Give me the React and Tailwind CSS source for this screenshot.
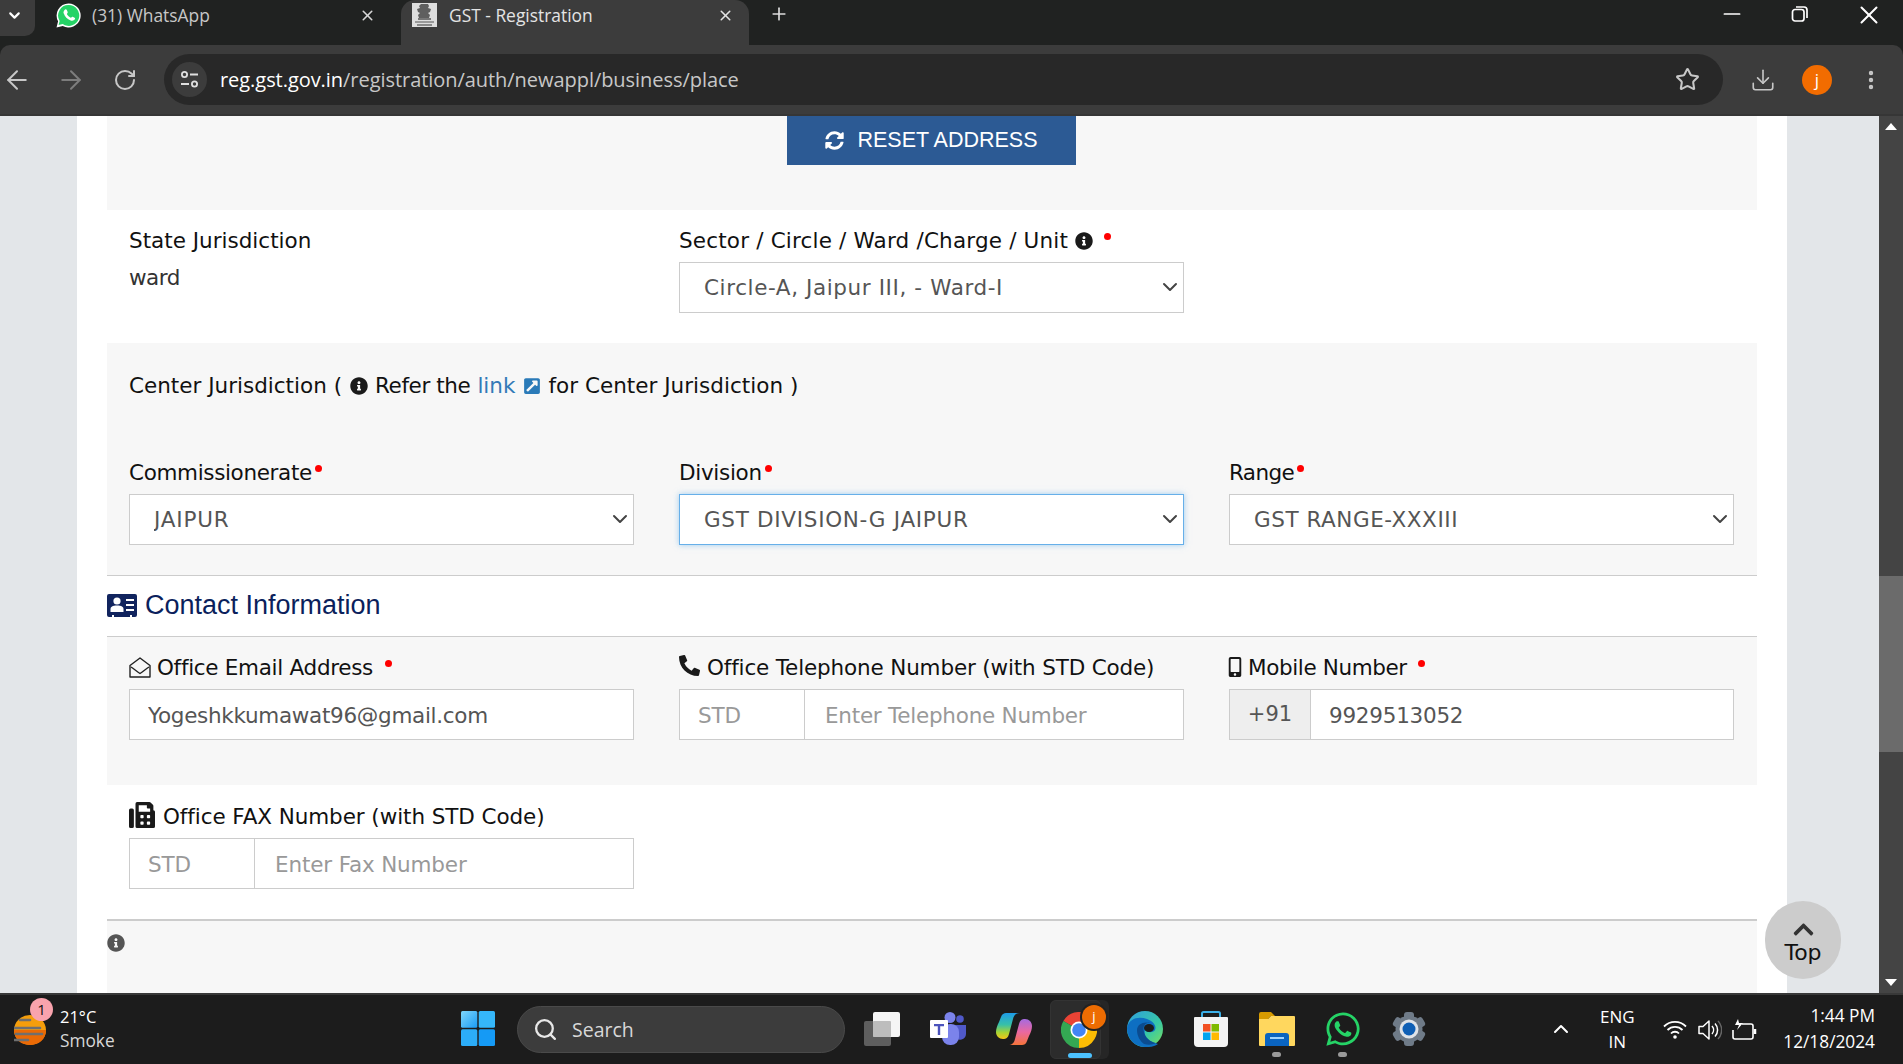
import React from "react";
import { FaWhatsapp, FaInfoCircle, FaSyncAlt, FaPhoneAlt, FaMobileAlt, FaFax, FaExternalLinkSquareAlt, FaChevronUp } from "react-icons/fa";
import { ArrowLeft, ArrowRight, RotateCw, Star, Download, EllipsisVertical, Minus, X, Plus, ChevronDown, Search, ChevronUp } from "lucide-react";

const Req = ({ className = "" }) => <span className={`inline-block w-[7px] h-[7px] rounded-full bg-[#ff0000] ${className}`} />;

const Sel = ({ value, focus, track }) => (
  <div className="relative">
    <select
      defaultValue={value}
      className={`appearance-none w-full h-[51px] bg-white pl-[24px] pt-[2px] text-[#555] text-[21.5px] outline-none border ${track} ${focus ? "border-[#66afe9] shadow-[0_0_6px_rgba(102,175,233,0.6)]" : "border-[#ccc]"}`}
    >
      <option>{value}</option>
    </select>
    <ChevronDown size={24} strokeWidth={2} className="absolute right-[2px] top-[13px] text-[#444] pointer-events-none" />
  </div>
);

const Field = ({ placeholder, value, className = "" }) => (
  <input
    readOnly
    placeholder={placeholder}
    defaultValue={value}
    className={`h-[51px] bg-white border border-[#ccc] pl-[18px] pr-[18px] pt-[1px] text-[21.5px] text-[#555] placeholder:text-[#999] outline-none min-w-0 ${className}`}
  />
);

const Label = ({ children, className = "" }) => <div className={`h-[26px] flex items-center pt-[1px] text-[#111] text-[21.5px] leading-none whitespace-nowrap ${className}`}>{children}</div>;

function Emblem() {
  return (
    <svg width="25" height="24" viewBox="0 0 25 24" className="shrink-0">
      <rect width="25" height="24" fill="#dedede" />
      <path d="M9 1h7l1 2-1 2 3 1-1 3-2 1 2 2-1 3H7l-1-3 2-2-2-1-1-3 3-1-1-2z" fill="#5f5f5f" />
      <rect x="6" y="15" width="13" height="2" fill="#777" />
      <rect x="3" y="18" width="19" height="2" fill="#999" />
      <rect x="5" y="21" width="15" height="2" fill="#888" />
    </svg>
  );
}

const PHONE = "M8 7c1-1.5 2-1 2.5 0l.7 1.7c.2.5 0 1-.5 1.5-.3.3-.2.7.1 1.2.7 1.1 1.7 2 2.9 2.6.4.2.7.2 1-.1.4-.5.8-.9 1.3-.7l1.8.9c.6.3.7.9.3 1.6-.8 1.3-2.4 1.7-4 1.1-3.3-1.2-5.6-3.6-6.6-6.6C7 9.8 7.1 8 8 7z";

function Browser() {
  return (
    <>
      <div className="h-[45px] shrink-0 bg-[#202221] flex items-start text-[17.4px] font-['Open_Sans',sans-serif]">
        <div className="w-[35px] h-[36px] bg-[#3c3c3c] rounded-br-[10px] flex items-center justify-center pr-[6px]">
          <ChevronDown size={17} strokeWidth={3} className="text-white -mt-[6px]" />
        </div>
        <div className="w-[366px] h-[45px] flex items-center pl-[21px] pr-[25px] pb-[15px] text-[#c7c7c7]">
          <svg width="25" height="25" viewBox="0 0 24 24" className="mr-[11px] shrink-0">
            <path d="M12 .5A11.5 11.5 0 0 0 2 17.6L.5 23.5l6-1.5A11.5 11.5 0 1 0 12 .5z" fill="#fff" />
            <path d="M12 2a10 10 0 0 0-8.5 15.2l-1 3.9 4-1A10 10 0 1 0 12 2z" fill="#25d366" />
            <path d={PHONE} fill="#fff" />
          </svg>
          <span className="flex-1">(31) WhatsApp</span>
          <X size={17} strokeWidth={2.2} className="text-[#d8d8d8]" />
        </div>
        <div className="w-[348px] h-[45px] bg-[#3c3c3c] rounded-t-[14px] flex items-center pl-[11px] pr-[15px] pb-[15px] text-[#e4e4e4]">
          <Emblem />
          <span className="flex-1 ml-[12px]">GST - Registration</span>
          <X size={17} strokeWidth={2.2} className="text-[#e4e4e4]" />
        </div>
        <div className="ml-[20px] h-[27px] flex items-center">
          <Plus size={20} strokeWidth={2} className="text-[#dcdcdc]" />
        </div>
        <div className="flex-1" />
        <div className="flex items-center h-[27px] pr-[19px] text-white">
          <Minus size={26} strokeWidth={1.6} />
          <svg className="ml-[46px]" width="18" height="18" viewBox="0 0 18 18" fill="none" stroke="currentColor" strokeWidth="1.7">
            <rect x="1.5" y="4.5" width="11.5" height="11.5" rx="2.5" />
            <path d="M5 2h8a3 3 0 0 1 3 3v8" />
          </svg>
          <X size={30} strokeWidth={1.6} className="ml-[45px] mt-[2px]" />
        </div>
      </div>
      <div className="h-[71px] shrink-0 bg-[#3c3c3c] rounded-t-[10px] border-b-2 border-[#363636] flex items-center text-[#c7c7c7]">
        <div className="w-[34px] flex justify-center"><ArrowLeft size={30} strokeWidth={1.6} /></div>
        <div className="w-[54px] ml-[10px] flex justify-center"><ArrowRight size={30} strokeWidth={1.6} className="text-[#7d7d7d]" /></div>
        <div className="w-[54px] flex justify-center"><RotateCw size={24} strokeWidth={2} /></div>
        <div className="ml-[12px] w-[1559px] h-[51px] bg-[#282828] rounded-full flex items-center pl-[8px] pr-[23px]">
          <div className="w-[35px] h-[35px] rounded-full bg-[#3c3c3c] flex items-center justify-center">
            <svg width="19" height="19" viewBox="0 0 19 19" fill="none" stroke="#e0e0e0" strokeWidth="1.8">
              <circle cx="4.5" cy="4.5" r="2.6" /><path d="M10 4.5h8M1 14h8" /><circle cx="14.5" cy="14" r="2.6" />
            </svg>
          </div>
          <div className="ml-[13px] flex-1 text-[20px] text-[#c7c7c7] font-['Open_Sans',sans-serif] tracking-[-0.05px]">
            <span className="text-white">reg.gst.gov.in</span>/registration/auth/newappl/business/place
          </div>
          <Star size={25} strokeWidth={2} />
        </div>
        <div className="ml-[27px] w-[26px] flex justify-center"><Download size={36} strokeWidth={1.5} /></div>
        <div className="ml-[26px] w-[30px] h-[30px] rounded-full bg-[#f26c00] text-white text-[17px] flex items-center justify-center font-['Open_Sans',sans-serif]">j</div>
        <div className="ml-[27px] w-[24px] flex justify-center"><EllipsisVertical size={24} strokeWidth={2.4} /></div>
      </div>
    </>
  );
}

const COLS = "grid grid-cols-[505px_505px_505px] gap-x-[45px] px-[22px]";

function Page() {
  return (
    <div className="flex-1 min-h-0 flex bg-[#e3e6e9] font-['DejaVu_Sans',sans-serif] overflow-hidden">
      <div className="ml-[77px] w-[1710px] bg-white px-[30px] overflow-hidden h-full">
        <div className="w-[1650px]">
          <div className="h-[94px] bg-[#f7f7f7] flex justify-center">
            <button className="mr-[2px] w-[289px] h-[49px] bg-[#2c5a94] text-white text-[21.5px] flex items-center justify-center gap-[13px] pb-[1px] pl-[1px] font-['Liberation_Sans',sans-serif]">
              <FaSyncAlt size={19} /> RESET ADDRESS
            </button>
          </div>

          <div className={`h-[133px] ${COLS}`}>
            <div className="pt-[17px]">
              <Label>State Jurisdiction</Label>
              <div className="h-[26px] mt-[11px] pt-[1px] flex items-center text-[#333] text-[21.5px] leading-none tracking-[-0.5px]">ward</div>
            </div>
            <div className="pt-[17px]">
              <Label className="tracking-[0.18px]">
                Sector / Circle / Ward /Charge / Unit
                <FaInfoCircle size={18} className="ml-[7px] text-[#1a1a1a]" />
                <Req className="ml-[11px] -mt-[8px]" />
              </Label>
              <div className="mt-[9px]"><Sel value="Circle-A, Jaipur III, - Ward-I" track="tracking-[0.6px]" /></div>
            </div>
          </div>

          <div className="h-[233px] bg-[#f7f7f7] border-b border-[#ccc]">
            <div className="pt-[29px] h-[116px] px-[22px]">
              <Label>
                <span>Center Jurisdiction (</span>
                <FaInfoCircle size={18} className="ml-[8px] mr-[7px] text-[#1a1a1a]" />
                <span className="tracking-[-0.4px]">Refer the</span>
                <span className="ml-[7px] text-[#337ab7]">link</span>
                <FaExternalLinkSquareAlt size={18} className="ml-[8px] mr-[7px] text-[#2a7ab8]" />
                <span className="tracking-[0.02px]">for Center Jurisdiction )</span>
              </Label>
            </div>
            <div className={COLS}>
              {[
                ["Commissionerate", "JAIPUR", false, "tracking-[-0.35px]", "tracking-[0.8px]"],
                ["Division", "GST DIVISION-G JAIPUR", true, "tracking-[-0.3px]", "tracking-[0.7px]"],
                ["Range", "GST RANGE-XXXIII", false, "tracking-[-0.6px]", "tracking-[0.55px]"],
              ].map(([l, v, f, lt, st]) => (
                <div key={l}>
                  <Label className={lt}>{l}<Req className="ml-[3px] -mt-[8px]" /></Label>
                  <div className="mt-[9px]"><Sel value={v} focus={f} track={st} /></div>
                </div>
              ))}
            </div>
          </div>

          <div className="h-[61px] border-b border-[#ccc] flex items-center pb-[2px] font-['Liberation_Sans',sans-serif] text-[#0b1f5c] text-[27px]">
            <svg width="30" height="23" viewBox="0 0 30 23" className="mr-[8px] shrink-0">
              <path d="M2 0h26a2 2 0 0 1 2 2v19a2 2 0 0 1-2 2h-3v-2h-2v2H7v-2H5v2H2a2 2 0 0 1-2-2V2a2 2 0 0 1 2-2z" fill="#11245e" />
              <circle cx="10" cy="7" r="3.6" fill="#fff" />
              <path d="M3.5 18v-3c0-2 2-3.5 6.5-3.5s6.5 1.500 6.500 3.500v3z" fill="#fff" />
              <path d="M19 5h8v2h-8zM19 10h8v2h-8zM19 15h8v2h-8z" fill="#fff" />
            </svg>
            Contact Information
          </div>

          <div className={`h-[148px] bg-[#f7f7f7] pt-[17px] content-start ${COLS}`}>
            <div>
              <Label className="tracking-[-0.3px]">
                <svg width="22" height="21" viewBox="0 0 22 21" fill="none" stroke="#222" strokeWidth="1.4" className="mr-[6px] shrink-0">
                  <path d="M1 8.500 11 1l10 7.500V20H1z" strokeLinejoin="round" />
                  <path d="M2 10c3 2 6 4.500 9 6.500 3-2 6-4.500 9-6.500" />
                </svg>
                Office Email Address<Req className="ml-[12px] -mt-[8px]" />
              </Label>
              <Field className="w-full mt-[9px] tracking-[-0.3px]" value="Yogeshkkumawat96@gmail.com" />
            </div>
            <div>
              <Label className="tracking-[-0.16px]"><FaPhoneAlt size={21} className="mr-[7px] -mt-[5px] text-[#1a1a1a] shrink-0" />Office Telephone Number (with STD Code)</Label>
              <div className="flex mt-[9px]">
                <Field className="w-[126px] tracking-[-0.2px]" placeholder="STD" />
                <Field className="flex-1 -ml-px !pl-[20px] tracking-[-0.25px]" placeholder="Enter Telephone Number" />
              </div>
            </div>
            <div>
              <Label className="tracking-[-0.38px]"><FaMobileAlt size={20} className="-ml-[4px] mr-[3px] -mt-[2px] text-[#1a1a1a] shrink-0" />Mobile Number<Req className="ml-[11px] -mt-[8px]" /></Label>
              <div className="flex mt-[9px]">
                <div className="w-[82px] h-[51px] pt-[1px] bg-[#eee] border border-[#ccc] flex items-center justify-center text-[#555] text-[21px]">+91</div>
                <Field className="flex-1 -ml-px tracking-[-0.25px]" value="9929513052" />
              </div>
            </div>
          </div>

          <div className={`h-[136px] border-b-2 border-[#ccc] pt-[18px] content-start ${COLS}`}>
            <div>
              <Label className="tracking-[-0.08px]"><FaFax size={26} className="mr-[8px] -mt-[4px] text-[#1a1a1a] shrink-0" />Office FAX Number (with STD Code)</Label>
              <div className="flex mt-[9px]">
                <Field className="w-[126px] tracking-[-0.2px]" placeholder="STD" />
                <Field className="flex-1 -ml-px !pl-[20px] tracking-[-0.15px]" placeholder="Enter Fax Number" />
              </div>
            </div>
          </div>

          <div className="h-[73px] bg-[#f7f7f7] pt-[13px]">
            <FaInfoCircle size={18} className="text-[#555]" />
          </div>
        </div>
      </div>

      <div className="relative flex-1">
        <div className="absolute left-[-22px] top-[785px] w-[76px] h-[78px] rounded-full bg-[#ccc] flex flex-col items-center pt-[17px] text-[#111] text-[22px] leading-none">
          <FaChevronUp size={23} className="text-[#333]" />
          <span className="mt-[1px]">Top</span>
        </div>
      </div>

      <div className="w-[24px] bg-[#444] flex flex-col items-center justify-between relative">
        <svg width="12" height="8" viewBox="0 0 12 8" className="mt-[7px]"><path d="M6 0l6 7H0z" fill="#fff" /></svg>
        <div className="absolute left-0 right-0 top-[460px] h-[176px] bg-[#6b6b6b]" />
        <svg width="12" height="8" viewBox="0 0 12 8" className="mb-[7px]"><path d="M6 8L0 1h12z" fill="#fff" /></svg>
      </div>
    </div>
  );
}

const IconBox = ({ children, className = "" }) => <div className={`w-[66px] flex justify-center shrink-0 ${className}`}>{children}</div>;

function Taskbar() {
  return (
    <div className="h-[71px] shrink-0 bg-[#1c1c1c] border-t-2 border-[#383838] flex items-center relative font-['Open_Sans',sans-serif] text-white">
      <div className="w-[461px] shrink-0 flex items-center pl-[14px] relative">
        <svg width="32" height="30" viewBox="0 0 32 30">
          <ellipse cx="16" cy="15" rx="16" ry="15" fill="#f59e0b" />
          <path d="M16 30c8 0 16-5 16-15H0c0 10 8 15 16 15z" fill="#ea6a06" />
          <path d="M6 5h10M0 13h26M2 19h26M0 25h14" stroke="#6f6f6f" strokeWidth="2.6" strokeLinecap="round" />
        </svg>
        <span className="absolute left-[30px] -top-[8px] w-[23px] h-[23px] rounded-full bg-[#f9a3ad] text-[#111] text-[15px] flex items-center justify-center">1</span>
        <div className="ml-[14px] text-[16.500px] leading-[24px] -mt-[1px]">
          <div>21°C</div>
          <div className="text-[#d8d8d8] text-[17.300px]">Smoke</div>
        </div>
      </div>

      <svg width="34" height="35" viewBox="0 0 34 35" className="shrink-0 -mt-[2px]">
        <defs>
          <linearGradient id="wa" x1="0" y1="0" x2="1" y2="1"><stop offset="0" stopColor="#7fd6fb" /><stop offset="1" stopColor="#1a9cf5" /></linearGradient>
        </defs>
        <rect width="16.3" height="16.8" rx="1.5" fill="url(#wa)" />
        <rect x="17.7" width="16.3" height="16.8" rx="1.5" fill="#35b7fa" />
        <rect y="18.2" width="16.3" height="16.8" rx="1.5" fill="#2cadf8" />
        <rect x="17.7" y="18.2" width="16.3" height="16.8" rx="1.5" fill="#159af5" />
      </svg>

      <div className="ml-[22px] w-[328px] h-[47px] rounded-full bg-[#3c3c3c] border border-[#4a4a4a] flex items-center pl-[15px] text-[#d8d8d8] text-[19.500px] shrink-0">
        <Search size={25} strokeWidth={2.2} className="text-[#e8e8e8]" />
        <span className="ml-[14px]">Search</span>
      </div>

      <div className="ml-[4px] flex items-center shrink-0 -mt-[2px]">
        <IconBox>
          <svg width="36" height="34" viewBox="0 0 36 34">
            <rect x="0" y="9" width="27" height="25" rx="2" fill="#5e5e5e" />
            <rect x="9" y="0" width="27" height="25" rx="2" fill="#f5f5f5" />
            <rect x="9" y="9" width="18" height="16" rx="1" fill="#bdbdbd" />
          </svg>
        </IconBox>
        <IconBox>
          <svg width="36" height="33" viewBox="0 0 36 33">
            <circle cx="20" cy="5.500" r="5.500" fill="#7b83eb" /><circle cx="30" cy="7" r="3.800" fill="#5059c9" />
            <path d="M25 13h11v9a6 6 0 0 1-11 3z" fill="#5059c9" />
            <rect x="12" y="12" width="17" height="21" rx="8" fill="#7b83eb" />
            <rect x="0" y="8" width="18" height="18" rx="1" fill="#fff" />
            <path d="M4 12h10v2.200H10.200V23H7.800v-8.800H4z" fill="#4b53bc" />
          </svg>
        </IconBox>
        <IconBox>
          <svg width="36" height="33" viewBox="0 0 36 33">
            <defs>
              <linearGradient id="c1" x1="0" y1="0" x2="0" y2="1"><stop offset="0" stopColor="#1d9be8" /><stop offset=".45" stopColor="#37c0a8" /><stop offset=".75" stopColor="#a8d433" /><stop offset="1" stopColor="#f5c518" /></linearGradient>
              <linearGradient id="c2" x1="0" y1="0" x2="0" y2="1"><stop offset="0" stopColor="#f5743a" /><stop offset=".5" stopColor="#ea68a0" /><stop offset="1" stopColor="#a56be0" /></linearGradient>
            </defs>
            <path d="M10 1h14c-4 0-6 2-7 6l-4 15c-1 4-3 5-6 5-4 0-7-3-7-7 0-3 1-6 3-10l2-5c1-3 3-4 5-4z" fill="url(#c1)" />
            <path d="M10 1h14c-4 0-6 2-7 6l-4 15c-1 4-3 5-6 5-4 0-7-3-7-7 0-3 1-6 3-10l2-5c1-3 3-4 5-4z" fill="url(#c2)" transform="rotate(180 18 16.500) translate(0 -1)" />
          </svg>
        </IconBox>
        <div className="w-[59px] h-[59px] mx-[3px] flex relative shrink-0 mt-[2px] rounded-[6px] bg-[#262626]">
          <div className="w-[51px] h-[59px] rounded-[6px] bg-[#2c2c2c] border border-[#333] flex justify-center items-center relative">
            <svg width="36" height="36" viewBox="0 0 36 36" className="ml-[7px]">
              <path d="M18 18L2.400 9A18 18 0 0 1 33.600 9z" fill="#ea4335" />
              <path d="M18 18L33.600 9A18 18 0 0 1 18 36z" fill="#fbbc04" />
              <path d="M18 18L18 36A18 18 0 0 1 2.400 9z" fill="#34a853" />
              <circle cx="18" cy="18" r="8.500" fill="#fff" /><circle cx="18" cy="18" r="6.800" fill="#4285f4" />
            </svg>
            <span className="absolute left-[31px] top-[4px] w-[24px] h-[24px] rounded-full bg-[#ed6c02] text-[13px] flex items-center justify-center shadow-[0_0_0_2px_#222]">j</span>
            <span className="absolute left-[17px] bottom-[0px] w-[24px] h-[5px] rounded-full bg-[#4cc2ff]" />
          </div>
        </div>
        <IconBox>
          <svg width="36" height="36" viewBox="0 0 36 36">
            <defs>
              <linearGradient id="e1" x1="0" y1="0" x2="1" y2="1"><stop offset="0" stopColor="#2f9ee0" /><stop offset=".6" stopColor="#37c9a5" /><stop offset="1" stopColor="#7fe05a" /></linearGradient>
            </defs>
            <circle cx="18" cy="18" r="18" fill="url(#e1)" />
            <path d="M0 17C2 7 12 5 20 8c6 2 10 7 8 11-2 3-8 3-10 0-2 6 3 11 10 13l3 1c-4 3-9 3-13 3C8 36 0 28 0 17z" fill="#0e6fc2" />
            <path d="M10 19c0-6 7-9 13-7-4-1-8 3-6 9 1 5 6 10 12 11-4 2-8 2-12 1-4-3-7-8-7-14z" fill="#0b4c90" />
            <ellipse cx="22" cy="17" rx="5" ry="4" fill="#1c1c1c" />
          </svg>
        </IconBox>
        <IconBox>
          <svg width="36" height="36" viewBox="0 0 36 36">
            <path d="M9 7V2.500A1.500 1.500 0 0 1 10.500 1h15A1.500 1.500 0 0 1 27 2.500V7" fill="none" stroke="#3bb0e8" strokeWidth="2" />
            <path d="M2 6h32a1 1 0 0 1 1 1v25a4 4 0 0 1-4 4H5a4 4 0 0 1-4-4V7a1 1 0 0 1 1-1z" fill="#f3f3f3" />
            <rect x="10" y="13" width="7.500" height="7.500" fill="#f25022" /><rect x="18.500" y="13" width="7.500" height="7.500" fill="#7fba00" />
            <rect x="10" y="21.500" width="7.500" height="7.500" fill="#00a4ef" /><rect x="18.500" y="21.500" width="7.500" height="7.500" fill="#ffb900" />
          </svg>
        </IconBox>
        <IconBox className="relative">
          <svg width="36" height="34" viewBox="0 0 36 34">
            <path d="M0 2a2 2 0 0 1 2-2h10l4 4h-4L9 7H0z" fill="#d69a00" />
            <path d="M0 7h9l3-3h23a1 1 0 0 1 1 1v28a1 1 0 0 1-1 1H1a1 1 0 0 1-1-1z" fill="#ffd75e" />
            <path d="M6 34V24a3 3 0 0 1 3-3h18a3 3 0 0 1 3 3v10z" fill="#0a64c0" />
            <rect x="11" y="25" width="14" height="2" fill="#9fd4ff" />
          </svg>
          <span className="absolute left-[28px] -bottom-[11px] w-[9px] h-[5px] rounded-full bg-[#9a9a9a]" />
        </IconBox>
        <IconBox className="relative">
          <FaWhatsapp size={38} className="text-[#25d366]" />
          <span className="absolute left-[28px] -bottom-[9px] w-[9px] h-[5px] rounded-full bg-[#9a9a9a]" />
        </IconBox>
        <IconBox>
          <svg width="36" height="36" viewBox="0 0 36 36">
            <g fill="#6f7b88">
              <circle cx="18" cy="18" r="13.500" />
              <rect x="13" y="1" width="10" height="34" rx="3" />
              <rect x="13" y="1" width="10" height="34" rx="3" transform="rotate(60 18 18)" />
              <rect x="13" y="1" width="10" height="34" rx="3" transform="rotate(120 18 18)" />
            </g>
            <circle cx="18" cy="18" r="9.500" fill="#dfe3e8" /><circle cx="18" cy="18" r="6.500" fill="#0f5fb5" />
          </svg>
        </IconBox>
      </div>

      <div className="flex-1" />
      <ChevronUp size={24} strokeWidth={2} className="shrink-0 -mt-[2px]" />
      <div className="ml-[13px] w-[62px] text-center text-[17px] leading-[25px] shrink-0 -mt-[1px]">
        <div>ENG</div><div>IN</div>
      </div>
      <svg width="24" height="19" viewBox="0 0 24 19" fill="none" stroke="#fff" strokeWidth="1.8" className="ml-[15px] shrink-0">
        <path d="M1 6.500a15.500 15.500 0 0 1 22 0M4.500 10a10.500 10.500 0 0 1 15 0M8 13.500a5.500 5.500 0 0 1 8 0" />
        <circle cx="12" cy="17" r="1.800" fill="#fff" stroke="none" />
      </svg>
      <svg width="24" height="22" viewBox="0 0 24 22" fill="none" stroke="#fff" strokeWidth="1.500" className="ml-[11px] shrink-0">
        <path d="M1 7.500h4L11 2v18l-6-5.500H1z" strokeLinejoin="round" />
        <path d="M14 7a6 6 0 0 1 0 8M17 4.500a9.500 9.500 0 0 1 0 13" />
        <path d="M20 2a13 13 0 0 1 0 18" stroke="#666" />
      </svg>
      <svg width="25" height="23" viewBox="0 0 25 23" fill="none" stroke="#fff" strokeWidth="1.600" className="ml-[10px] shrink-0">
        <path d="M10 6h9a2 2 0 0 1 2 2v11a2 2 0 0 1-2 2H3a2 2 0 0 1-2-2v-7" />
        <path d="M23 11v5" strokeWidth="2.500" />
        <path d="M6 1 3 7h4l-2 5 6-7H7z" fill="#fff" stroke="none" />
      </svg>
      <div className="ml-[26px] pr-[28px] text-right text-[17.300px] leading-[26px] shrink-0 -mt-[1px]">
        <div>1:44 PM</div><div>12/18/2024</div>
      </div>
    </div>
  );
}

export default function App() {
  return (
    <div className="w-[1903px] h-[1064px] flex flex-col overflow-hidden bg-[#202221]">
      <Browser />
      <Page />
      <Taskbar />
    </div>
  );
}
